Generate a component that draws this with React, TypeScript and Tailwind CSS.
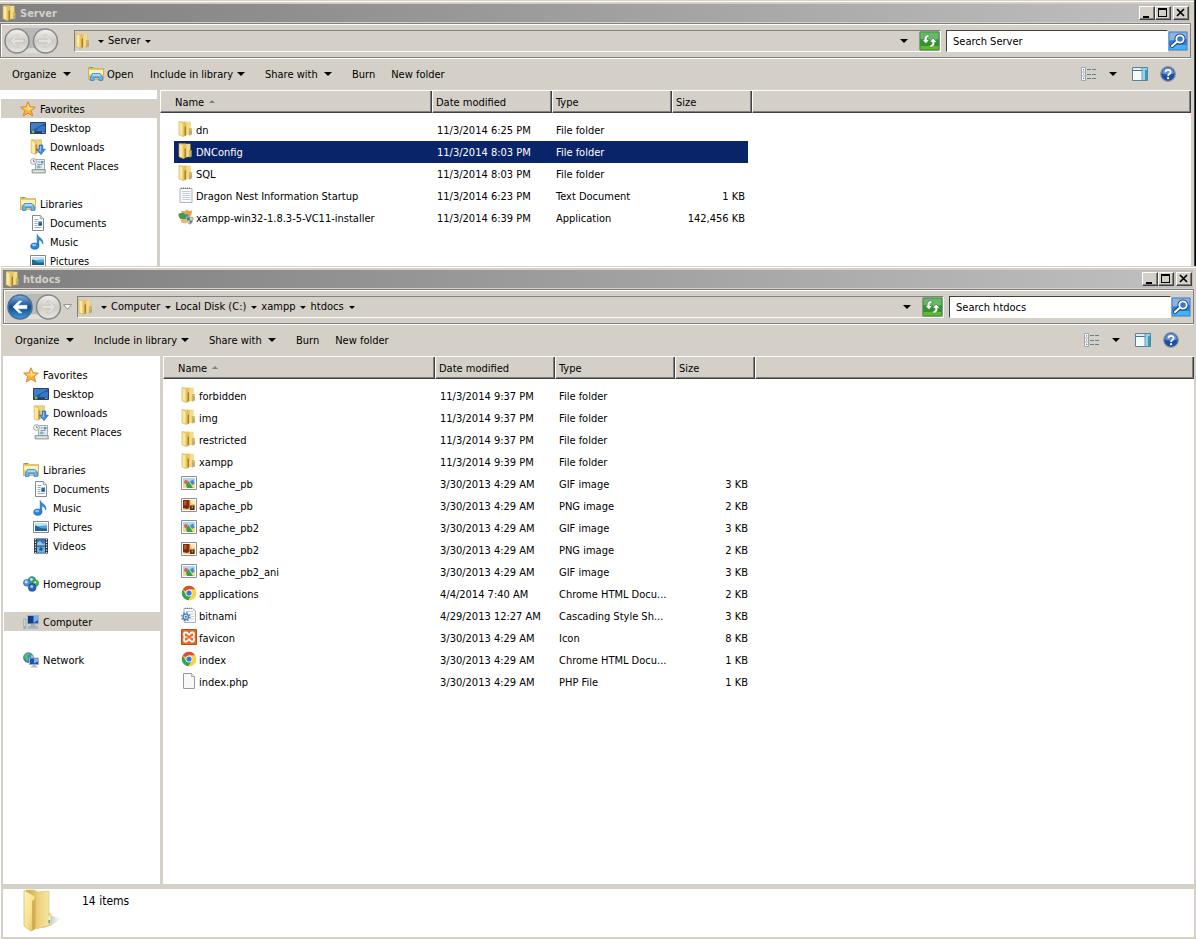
import type { ReactNode } from 'react';
import { clsx } from 'clsx';

type IconProps = { className?: string };

function Icon({ children, className = 'size-4' }: IconProps & { children: ReactNode }) {
  return (
    <svg viewBox="0 0 16 16" className={clsx('shrink-0', className)} aria-hidden="true">
      {children}
    </svg>
  );
}

function FolderIcon({ className }: IconProps) {
  return (
    <Icon className={className}>
      <path d="M2 .5h5.500v14L2 13z" fill="#efd682" />
      <path d="M6 .8h6.500v12.700L6 14.800z" fill="#e3c566" />
      <path d="M8.500 1h3.500v12.200l-3.500.9z" fill="#f2dc8c" />
      <path d="M1 .5 6.500 2.500v12.600l-1.200.4L1 13.800z" fill="#f9ea9f" stroke="#cda540" strokeWidth=".6" />
      <path d="M4.500 2 6.500 2.700v12.400l-1.200.3-.8-.3z" fill="#e6c35e" />
      <path d="M6.600 6v9l1.400-.8V5z" fill="#ab7c26" />
      <path d="M11.300 7.500h2.200v6l-2.200.8z" fill="#dcb850" stroke="#b98f35" strokeWidth=".4" />
      <path d="M12.400 10.300h1v2.700h-1z" fill="#5aa5d8" />
    </Icon>
  );
}

function LibraryIcon({ className }: IconProps) {
  return (
    <Icon className={className}>
      <path d="M.5 1.500h5l1 1.200h9V13.500H.5z" fill="#e8cb6c" stroke="#c4a040" strokeWidth=".7" />
      <path d="M1 4h14v4.500H1z" fill="#faf0b8" />
      <path d="M1.500 1.700h3" stroke="#4fae48" strokeWidth="1.200" />
      <path d="M2.500 14.500V11l2-3.500h7.500l2.500 3.500v3.500h-3.500v-3H6v3z" fill="#63b5ee" stroke="#2e7cc4" strokeWidth=".7" />
      <path d="M5 8.200h6.800l1 1.600H4.200z" fill="#b9e2fb" />
    </Icon>
  );
}

function StarIcon() {
  return (
    <Icon>
      <path d="m8 .7 2.100 5 5.300.4-4 3.500 1.300 5.400L8 12.200 3.300 15l1.300-5.400-4-3.500 5.300-.4z" fill="#f9b234" stroke="#d9782a" strokeWidth=".8" />
      <path d="m8 2.600 1.400 4 3.900.3-5.300 3z" fill="#ffe88c" />
      <path d="m8 2.600-1.400 4-3.900.3L8 9.500z" fill="#fdd25f" />
    </Icon>
  );
}

function DesktopIcon() {
  return (
    <Icon>
      <path d="M.5 2.500h15v11H.5z" fill="#1d5ba8" stroke="#2a3f66" />
      <path d="M1 3h14L1 11z" fill="#3f7fc6" />
      <path d="M8 8.500c2-2 5-3 7-2.500v5H6z" fill="#3777c4" />
      <path d="M1 11.400h14V13H1z" fill="#24426f" />
      <circle cx="3" cy="12" r="1.400" fill="#6cc04a" />
      <path d="M3 10.600A1.400 1.400 0 0 1 4.400 12H3z" fill="#f39a2d" />
      <path d="M12 12.200h2.500" stroke="#9fc2ea" />
    </Icon>
  );
}

function DownloadsIcon() {
  return (
    <Icon>
      <path d="M2 .8h9.500V13.500H6z" fill="#ecd480" stroke="#c9a750" strokeWidth=".5" />
      <path d="M1.200.8 5.500 3v12.400L1.200 14z" fill="#f9ea9f" stroke="#cfa945" strokeWidth=".6" />
      <path d="M5.600 6v9l1.600-1V5z" fill="#b98b33" />
      <path d="M9.300 6h3.400v4.200h2.600L11 15.600l-4.300-5.400h2.600z" fill="#3f8ee4" stroke="#1b57ae" strokeWidth=".7" />
      <path d="M10 6.800h1v6L8.200 10.800H10z" fill="#8fc4f7" />
    </Icon>
  );
}

function RecentIcon() {
  return (
    <Icon>
      <path d="M5.500 1.500h9v10h-9z" fill="#e6ebee" stroke="#8f989c" strokeWidth=".8" />
      <path d="M7.500 4h3M7.500 6.500h5M7.500 9h4" stroke="#8a9aa4" />
      <path d="M11 3h2.400v2.400H11z" fill="#4d94c4" />
      <path d="M6.800 7.600h3.200v2.600H6.800z" fill="#79b7c9" />
      <path d="M2 11.500h13.300V15H2z" fill="#c2c6c6" stroke="#82898b" strokeWidth=".7" />
      <path d="M3.500 13.200h10.300" stroke="#f3f3f3" />
      <circle cx="3.500" cy="3.500" r="2.900" fill="#f5f7f8" stroke="#8a9194" strokeWidth=".8" />
      <path d="M3.500 1.800v1.900H5" fill="none" stroke="#4c5458" strokeWidth=".7" />
    </Icon>
  );
}

function DocumentIcon() {
  return (
    <Icon>
      <path d="M2.500.5h7.800l3.200 3.200v11.800h-11z" fill="#fdfdfd" stroke="#858a8f" />
      <path d="M10.300.5v3.200h3.200" fill="#dfe4e8" stroke="#858a8f" strokeWidth=".7" />
      <path d="M4.500 4.500h4M4.500 6.500h3M4.500 8.500h3M4.500 10.500h3M4.500 12.500h7" stroke="#7c97b4" strokeWidth=".8" />
      <path d="M8.300 6.500h3.700v4H8.300z" fill="#2f72b8" />
      <path d="m8.300 10.500 2-2.300 1.700 2.300z" fill="#174879" />
    </Icon>
  );
}

function MusicIcon() {
  return (
    <Icon>
      <path d="M7.200 12V.500c.6 3 6.600 3.600 5.600 9.500-.4-2.200-2.200-3.700-4-4.200V12z" fill="#2e8be0" stroke="#1863b4" strokeWidth=".6" />
      <ellipse cx="4.800" cy="12.200" rx="4.100" ry="3.100" fill="#2b84dc" stroke="#1863b4" strokeWidth=".6" />
      <ellipse cx="4.100" cy="11.200" rx="2.100" ry="1.100" fill="#93cbf8" />
    </Icon>
  );
}

function PictureIcon() {
  return (
    <Icon>
      <path d="M.5 2.500h15v11H.5z" fill="#fff" stroke="#85898c" />
      <path d="M2 4h12v8H2z" fill="#4ba3e0" />
      <path d="M2 4h12v2.200L2 7.500z" fill="#bfe3f5" />
      <path d="M2 6.500c2 0 3 1.300 5 2.300s4 .7 7 .6V12H2z" fill="#1d6f8c" />
      <path d="M2 10.300c4 .8 8 .6 12-.2V12H2z" fill="#2a56a0" />
    </Icon>
  );
}

function VideoIcon() {
  return (
    <Icon>
      <path d="M1 .5h14v15H1z" fill="#2c3138" />
      <path d="M4 1.200h8v6.300H4z" fill="#2f77c8" />
      <path d="M4 8.500h8v6.300H4z" fill="#62b4ee" />
      <path d="m4 5 3-2 3 3 2-1v2.500H4z" fill="#86caef" />
      <path d="m7 9 3 1-1 3-3-1z" fill="#205aa5" />
      <path d="M2.500 1v14M13.500 1v14" stroke="#eef0f2" strokeWidth="1.300" strokeDasharray="1.300 1.300" />
    </Icon>
  );
}

function HomegroupIcon() {
  return (
    <Icon>
      <circle cx="9" cy="4.200" r="3.600" fill="#3da88c" stroke="#1e6d77" strokeWidth=".6" />
      <circle cx="3.800" cy="6.800" r="3.400" fill="#4d93d8" stroke="#2a5da6" strokeWidth=".6" />
      <circle cx="12.400" cy="7.200" r="3.200" fill="#47b157" stroke="#28803c" strokeWidth=".6" />
      <circle cx="9.200" cy="11.400" r="3.900" fill="#2c62bb" stroke="#183f88" strokeWidth=".6" />
      <circle cx="3.200" cy="6" r="1.400" fill="#d3eafa" />
      <circle cx="8.400" cy="3.400" r="1.300" fill="#c4f0d8" />
      <circle cx="12.200" cy="6.300" r="1.100" fill="#d0f4c6" />
      <circle cx="8.700" cy="10.500" r="1.500" fill="#a6cbf3" />
    </Icon>
  );
}

function ComputerIcon() {
  return (
    <Icon>
      <path d="M.8 5h2v9.500h-2z" fill="#e5e8ea" stroke="#7b8184" strokeWidth=".6" />
      <path d="M1.300 12h1v1.400h-1z" fill="#53b44a" />
      <path d="M4.500 1.500h11v8.300h-11z" fill="#1c4fae" stroke="#a5afb9" />
      <path d="M5 2h5.500v7.300H5z" fill="#123a8c" />
      <path d="M10.500 2H15v4l-4.500 3z" fill="#76aeec" />
      <path d="M8.500 10.300h3v2h-3zM6 12.300h8l1 2H5z" fill="#b4bcc3" stroke="#868e95" strokeWidth=".4" />
    </Icon>
  );
}

function NetworkIcon() {
  return (
    <Icon>
      <circle cx="5.500" cy="5.700" r="5" fill="#3b86d6" stroke="#2861a5" strokeWidth=".6" />
      <path d="M1.500 3.500C3 1 6 .8 7.800 1.500 7 3 5 3 4.600 4.500s1.500 2.600.3 4.300C3 8.500 1 6 1.500 3.500z" fill="#5fc04f" />
      <path d="M8.500 2.500c1 .6 1.800 1.800 1.800 3H8z" fill="#a7e28b" />
      <path d="M6.500 6h9v6.700h-9z" fill="#1c4fae" stroke="#a9b3bc" />
      <path d="M11 6.500h4v3l-4 2z" fill="#7ab3ef" />
      <path d="M9.800 13h2.600v1.300H9.800zM8.200 14.300h6v1.200h-6z" fill="#aab3ba" />
    </Icon>
  );
}

function TextFileIcon() {
  return (
    <Icon>
      <path d="M2 1.500h12v14H2z" fill="#fbfcfd" stroke="#98a0a8" strokeWidth=".8" />
      <path d="M3 1.300h10" stroke="#6c747b" strokeWidth="1.600" strokeDasharray="1 1" />
      <path d="M4 4.500h8.500M4 6.500h8.500M4 8.500h8.500M4 10.500h8.500M4 12.500h8.500" stroke="#b5c3d0" strokeWidth=".8" />
    </Icon>
  );
}

function InstallerIcon() {
  return (
    <Icon>
      <path d="M2.500 1.500 6.500 2.500 9 .5l2 1.500 3-.5-.5 4L11.500 8.500l-5-1z" fill="#eda04c" />
      <path d="M.8 4.500 5 3.400l2 1.800 3.500.2-.6 4L7 11 2 9.700.4 6.400z" fill="#3f9b58" />
      <path d="m2.500 10.800 5-1L9 12.800 8 14.400l-4.500-.7z" fill="#efb36b" />
      <path d="M11.800 7.200c1 .8 2.200 1 3.500 1 0 3.800-.8 6-3.500 7.300-2.700-1.300-3.500-3.500-3.500-7.300 1.300 0 2.500-.2 3.500-1z" fill="#3c78cf" stroke="#dbe4ee" strokeWidth=".5" />
      <path d="M11.800 7.700c.9.700 1.900 1 3 1 0 1-.1 1.900-.3 2.700h-2.700zM9.100 11.400h2.700V15c-1.500-.8-2.300-2-2.700-3.600z" fill="#f6cf49" />
    </Icon>
  );
}

function GifIcon() {
  return (
    <Icon>
      <path d="M.5 1.500h15v13H.5z" fill="#fff" stroke="#8f8f8f" />
      <path d="M2 3h12v10H2z" fill="#a8daf5" />
      <path d="M2 9.500 14 8v5H2z" fill="#f0dd7a" />
      <path d="m7.500 6 1.500 2.500 3 4.500H6l-1-3z" fill="#36a04a" />
      <circle cx="5" cy="7" r="1.900" fill="#e65e38" />
      <path d="m9 6.500 3-2 1.500 4L11 10z" fill="#4a86cd" />
    </Icon>
  );
}

function PngIcon() {
  return (
    <Icon>
      <path d="M.5 1.500h15v13H.5z" fill="#fff" stroke="#8f8f8f" />
      <path d="M2 3h12v10H2z" fill="#f2c678" />
      <path d="M2 3h6.500v8L6 12 2 11z" fill="#7e2d0f" />
      <path d="M3 4h2.500v4H3z" fill="#bb5a20" />
      <path d="M9.500 3H14v4h-3z" fill="#f8e6c0" />
      <path d="M9 8.500h4.500V13H9z" fill="#4b2a18" />
      <path d="M10.500 9.500h1.500v2h-1.500z" fill="#ee8b24" />
    </Icon>
  );
}

function ChromeIcon() {
  return (
    <Icon>
      <circle cx="8" cy="8" r="7.200" fill="#f8cf3a" />
      <path d="M8 8 1.770 4.400A7.200 7.200 0 0 1 14.230 4.400H8z" fill="#dd4b39" />
      <path d="M1.770 4.400A7.200 7.200 0 0 0 7.400 15.200L11 9.700 8 11.200 4.900 9.700z" fill="#31a353" />
      <path d="M14.230 4.400H8v3l3 2.300-3.600 5.500A7.200 7.200 0 0 0 14.230 4.400z" fill="#fbd13c" />
      <circle cx="8" cy="8" r="3.500" fill="#f4f7f9" />
      <circle cx="8" cy="8" r="2.600" fill="#3a7cd5" />
    </Icon>
  );
}

function CssFileIcon() {
  return (
    <Icon>
      <path d="M3 1.500h8.500L14.500 4v11.500H3z" fill="#fbfcfd" stroke="#969da3" strokeWidth=".8" />
      <path d="M4 1.300h7.500" stroke="#7c848b" strokeWidth="1.300" strokeDasharray="1 1" />
      <path d="M5 4.500h7M9 7h4M10 9.500h3M9 12h4" stroke="#bcc6cf" strokeWidth=".8" />
      <circle cx="4.800" cy="9.800" r="4" fill="none" stroke="#5585ad" strokeWidth="1.500" strokeDasharray="1.600 1.540" />
      <circle cx="4.800" cy="9.800" r="2.700" fill="#dcebf6" stroke="#4d80ac" strokeWidth="1.300" />
      <circle cx="4.800" cy="9.800" r="1" fill="#3e6c96" />
    </Icon>
  );
}

function XamppIcon() {
  return (
    <Icon>
      <path d="M.5.500h15v15H.5z" fill="#ea6a25" stroke="#bf4c14" />
      <path
        d="M4.200 3.500h1.300c1.500 0 1.500 2.300 2.500 2.300s1-2.300 2.500-2.300h1.300c1.600 0 1.600 4 0 4.500 1.600.5 1.600 4.500 0 4.500h-1.300c-1.500 0-1.500-2.300-2.500-2.300s-1 2.300-2.500 2.300H4.200c-1.600 0-1.600-4 0-4.500-1.600-.5-1.600-4.500 0-4.500z"
        fill="none"
        stroke="#fff"
        strokeWidth="1.800"
      />
    </Icon>
  );
}

function BlankFileIcon() {
  return (
    <Icon>
      <path d="M2.500.500h8l3 3v12h-11z" fill="#f8f8f8" stroke="#9a9a9a" />
      <path d="M10.500.500v3h3" fill="#e6e6e6" stroke="#9a9a9a" strokeWidth=".7" />
    </Icon>
  );
}

function BigFolderIcon() {
  return (
    <svg viewBox="0 0 42 44" className="h-11 w-[42px] shrink-0" aria-hidden="true">
      <defs>
        <linearGradient id="flap" x1="0" y1="0" x2="1" y2="1">
          <stop offset="0" stopColor="#fff6bd" />
          <stop offset=".6" stopColor="#f6e08c" />
          <stop offset="1" stopColor="#e0b650" />
        </linearGradient>
        <linearGradient id="back" x1="0" y1="0" x2="1" y2="0">
          <stop offset="0" stopColor="#d0a748" />
          <stop offset=".5" stopColor="#ecd27c" />
          <stop offset="1" stopColor="#f8eaa6" />
        </linearGradient>
        <linearGradient id="shade" x1="0" y1="0" x2="1" y2="0">
          <stop offset="0" stopColor="#a5a5a5" />
          <stop offset="1" stopColor="#fff" />
        </linearGradient>
      </defs>
      <path d="m28 26 11 4-11 7-8 2z" fill="url(#shade)" />
      <path d="M4 1h8l4 2 11-1v22l2 1v11l-15 4z" fill="url(#back)" stroke="#dcc06e" strokeWidth=".6" />
      <path d="M2 1.500 13 7v33l-4 2-7-5z" fill="url(#flap)" stroke="#d2ad4e" strokeWidth=".6" />
      <path d="M10 12l3-2v30l-3 1.500z" fill="#cfa04a" opacity=".75" />
      <path d="M27 24v12" stroke="#cfa945" strokeWidth=".6" />
      <path d="M26.500 27h1.500v6h-1.500z" fill="#eef6fb" />
      <path d="M26.500 31h1.500v3h-1.500z" fill="#4a9fd8" />
    </svg>
  );
}

function Arrow({ small = false }: { small?: boolean }) {
  return small ? (
    <svg viewBox="0 0 6 3" className="h-[3px] w-[6px] shrink-0" aria-hidden="true">
      <path d="M0 0h6L3 3z" />
    </svg>
  ) : (
    <svg viewBox="0 0 8 4" className="h-1 w-2 shrink-0" aria-hidden="true">
      <path d="M0 0h8L4 4z" />
    </svg>
  );
}

// Sets a caption on the same optical line as the 16px icon beside it
function Label({ children }: { children: ReactNode }) {
  return <span className="pt-[2px]">{children}</span>;
}

function TravelButtons({ canGoBack }: { canGoBack: boolean }) {
  return (
    <div className="relative -my-[3px] flex h-7 w-[57px] shrink-0 items-center gap-px">
      <svg viewBox="0 0 57 28" className="absolute inset-0 h-7 w-[57px]" aria-hidden="true">
        <defs>
          <linearGradient id="glass" x1="0" y1="0" x2="0" y2="1">
            <stop offset="0" stopColor="#f2f1ee" />
            <stop offset=".5" stopColor="#cfccc6" />
            <stop offset="1" stopColor="#e8e6e2" />
          </linearGradient>
          <linearGradient id="blue" x1="0" y1="0" x2="0" y2="1">
            <stop offset="0" stopColor="#7fb0df" />
            <stop offset=".5" stopColor="#134a91" />
            <stop offset="1" stopColor="#3f9bdc" />
          </linearGradient>
        </defs>
        <path d="M14 1h30c-8 5-8 18 0 25H14z" fill="#b9b9b8" />
        <path d="M20 24c5-4 13-4 18 0l6 2H14z" fill="#e0ded9" />
        <circle cx="14" cy="14" r="12" fill={canGoBack ? 'url(#blue)' : 'url(#glass)'} stroke={canGoBack ? '#4d6f94' : '#86898a'} strokeWidth="1.500" />
        <circle cx="42.500" cy="14" r="12" fill="url(#glass)" stroke="#86898a" strokeWidth="1.500" />
        <path d="m7 14 6-6h3l-4 4.300h9v3.400h-9l4 4.300h-3z" fill={canGoBack ? '#fff' : '#e3e1dd'} stroke={canGoBack ? '#dbe8f5' : '#bdbab4'} strokeWidth=".6" />
        <path d="m49.500 14-6-6h-3l4 4.300h-9v3.400h9L40.500 20h3z" fill="#e3e1dd" stroke="#bdbab4" strokeWidth=".6" />
      </svg>
      <button type="button" aria-label="Back" className="relative size-7 rounded-full" />
      <button type="button" aria-label="Forward" className="relative size-7 rounded-full" />
    </div>
  );
}

function RefreshIcon() {
  return (
    <svg viewBox="0 0 21 20" className="h-5 w-[21px]" aria-hidden="true">
      <rect x=".5" y=".5" width="20" height="19" rx="1.500" fill="#2f9433" stroke="#8a9a8a" />
      <path d="M1.500 1.500h18V8c-6 2-12 2-18 0z" fill="#67b968" />
      <path d="M1.500 15h18v3.500h-18z" fill="#62b92d" />
      <path d="M9.500 3.500C6 4 5 6 5.200 8.500H3l4 4.300L10.500 8.500H8c0-1.700.5-2.500 2.500-3z" fill="#f4faf2" stroke="#2d6b2e" strokeWidth=".6" />
      <path d="M11 16.500c3.800-.5 5-2.500 4.800-5.300h2.400L14 7l-3.600 4.200H13c0 2-.5 2.800-2.500 3.300z" fill="#f4faf2" stroke="#2d6b2e" strokeWidth=".6" />
    </svg>
  );
}

function SearchIcon() {
  return (
    <svg viewBox="0 0 20 20" className="size-5" aria-hidden="true">
      <rect x=".5" y=".5" width="19" height="19" rx="1" fill="#2c7fd8" stroke="#8aa4bd" />
      <path d="M1.500 1.500h17V8l-17 1.500z" fill="#8fb2e0" />
      <path d="M1.500 14h17v4.500h-17z" fill="#45b0f5" />
      <path d="m4 15 4.500-4" stroke="#17407c" strokeWidth="4" strokeLinecap="round" />
      <circle cx="12" cy="8" r="3.900" fill="#2a66b8" stroke="#17407c" strokeWidth="3.200" />
      <path d="m4 15 4.500-4" stroke="#fff" strokeWidth="2.200" strokeLinecap="round" />
      <circle cx="12" cy="8" r="3.700" fill="#3877c6" stroke="#fff" strokeWidth="1.800" />
    </svg>
  );
}

function ViewIcon() {
  return (
    <Icon>
      <path d="M.5 1.500h4v13h-4zM.5 6h4M.5 10h4" fill="#fff" stroke="#8597a6" strokeWidth=".8" />
      <path d="M2 3.300h1.200v1.200H2zM2 11.700h1.200v1.200H2z" fill="#4c7f9b" />
      <path d="M2 7.400h1.200v1.200H2z" fill="#c9442c" />
      <path d="M6 3.500h10M6 8.500h10M6 12.500h10" stroke="#66808a" strokeDasharray="4 1" />
    </Icon>
  );
}

function PreviewPaneIcon() {
  return (
    <Icon>
      <path d="M.5 1.500h15v13H.5z" fill="#f7f9fb" stroke="#56839f" />
      <path d="M1 2h14v2H1z" fill="#dfeaf3" />
      <path d="M1 4.500h9.500" stroke="#3a76a0" />
      <path d="M10.500 2H15v12h-4.500z" fill="#8ed3ee" />
      <path d="M13 4h2v10h-2z" fill="#3a9cb4" />
      <path d="M10 2v12" stroke="#5f93b5" />
    </Icon>
  );
}

function HelpIcon() {
  return (
    <Icon>
      <circle cx="8" cy="8" r="7.300" fill="#1c4faa" stroke="#8c929b" strokeWidth="1.200" />
      <path d="M2 7.500a6 6 0 0 1 12 0c-3 1.500-9 1.500-12 0z" fill="#5d8fd8" />
      <path d="M5.500 6.200C5.500 3 10.600 3.100 10.600 6c0 1.800-2.500 2-2.500 4" fill="none" stroke="#fff" strokeWidth="1.800" />
      <circle cx="8.100" cy="12.200" r="1.100" fill="#fff" />
    </Icon>
  );
}

type NavItem = { label: string; icon: ReactNode; child?: boolean; gap?: boolean };

const navItems: NavItem[] = [
  { label: 'Favorites', icon: <StarIcon /> },
  { label: 'Desktop', icon: <DesktopIcon />, child: true },
  { label: 'Downloads', icon: <DownloadsIcon />, child: true },
  { label: 'Recent Places', icon: <RecentIcon />, child: true },
  { label: 'Libraries', icon: <LibraryIcon />, gap: true },
  { label: 'Documents', icon: <DocumentIcon />, child: true },
  { label: 'Music', icon: <MusicIcon />, child: true },
  { label: 'Pictures', icon: <PictureIcon />, child: true },
  { label: 'Videos', icon: <VideoIcon />, child: true },
  { label: 'Homegroup', icon: <HomegroupIcon />, gap: true },
  { label: 'Computer', icon: <ComputerIcon />, gap: true },
  { label: 'Network', icon: <NetworkIcon />, gap: true },
];

type FileRow = { name: string; icon: ReactNode; date: string; type: string; size?: string };

const serverFiles: FileRow[] = [
  { name: 'dn', icon: <FolderIcon />, date: '11/3/2014 6:25 PM', type: 'File folder' },
  { name: 'DNConfig', icon: <FolderIcon />, date: '11/3/2014 8:03 PM', type: 'File folder' },
  { name: 'SQL', icon: <FolderIcon />, date: '11/3/2014 8:03 PM', type: 'File folder' },
  { name: 'Dragon Nest Information Startup', icon: <TextFileIcon />, date: '11/3/2014 6:23 PM', type: 'Text Document', size: '1 KB' },
  { name: 'xampp-win32-1.8.3-5-VC11-installer', icon: <InstallerIcon />, date: '11/3/2014 6:39 PM', type: 'Application', size: '142,456 KB' },
];

const htdocsFiles: FileRow[] = [
  { name: 'forbidden', icon: <FolderIcon />, date: '11/3/2014 9:37 PM', type: 'File folder' },
  { name: 'img', icon: <FolderIcon />, date: '11/3/2014 9:37 PM', type: 'File folder' },
  { name: 'restricted', icon: <FolderIcon />, date: '11/3/2014 9:37 PM', type: 'File folder' },
  { name: 'xampp', icon: <FolderIcon />, date: '11/3/2014 9:39 PM', type: 'File folder' },
  { name: 'apache_pb', icon: <GifIcon />, date: '3/30/2013 4:29 AM', type: 'GIF image', size: '3 KB' },
  { name: 'apache_pb', icon: <PngIcon />, date: '3/30/2013 4:29 AM', type: 'PNG image', size: '2 KB' },
  { name: 'apache_pb2', icon: <GifIcon />, date: '3/30/2013 4:29 AM', type: 'GIF image', size: '3 KB' },
  { name: 'apache_pb2', icon: <PngIcon />, date: '3/30/2013 4:29 AM', type: 'PNG image', size: '2 KB' },
  { name: 'apache_pb2_ani', icon: <GifIcon />, date: '3/30/2013 4:29 AM', type: 'GIF image', size: '3 KB' },
  { name: 'applications', icon: <ChromeIcon />, date: '4/4/2014 7:40 AM', type: 'Chrome HTML Docu...', size: '2 KB' },
  { name: 'bitnami', icon: <CssFileIcon />, date: '4/29/2013 12:27 AM', type: 'Cascading Style Sh...', size: '3 KB' },
  { name: 'favicon', icon: <XamppIcon />, date: '3/30/2013 4:29 AM', type: 'Icon', size: '8 KB' },
  { name: 'index', icon: <ChromeIcon />, date: '3/30/2013 4:29 AM', type: 'Chrome HTML Docu...', size: '1 KB' },
  { name: 'index.php', icon: <BlankFileIcon />, date: '3/30/2013 4:29 AM', type: 'PHP File', size: '1 KB' },
];

const captionButton =
  'flex h-[14px] w-4 items-center justify-center border border-t-white border-l-white border-r-[#404040] border-b-[#404040] bg-[#d4d0c8] shadow-[inset_-1px_-1px_0_#808080]';

function TitleBar({ title }: { title: string }) {
  return (
    <header className="mr-px flex h-[18px] items-center bg-linear-to-r from-[#808080] to-[#c0c0c0] pr-px pl-[2px]">
      <FolderIcon />
      <h2 className="ml-[2px] flex-1 pt-[2px] text-[11px] font-bold text-[#d4d0c8]">{title}</h2>
      <button type="button" aria-label="Minimize" className={captionButton}>
        <svg viewBox="0 0 10 10" className="size-[10px]"><path d="M1 8h6v2H1z" /></svg>
      </button>
      <button type="button" aria-label="Maximize" className={captionButton}>
        <svg viewBox="0 0 10 10" className="size-[10px]"><path d="M0 0h9v9H0zM1 2v6h7V2z" fillRule="evenodd" /></svg>
      </button>
      <button type="button" aria-label="Close" className={clsx(captionButton, 'ml-[2px]')}>
        <svg viewBox="0 0 10 10" className="size-[10px]"><path d="m1 1 7 7M8 1 1 8" stroke="#000" strokeWidth="1.700" /></svg>
      </button>
    </header>
  );
}

function AddressBar({ title, path, canGoBack }: { title: string; path: string[]; canGoBack: boolean }) {
  return (
    <div className="mt-px flex items-center border border-[#808080] pt-[6px] pr-[2px] pb-[5px] pl-[2px] shadow-[inset_1px_1px_0_#fff,0_1px_0_#fff]">
      <TravelButtons canGoBack={canGoBack} />
      <div className="flex w-[13px] items-center">
        {canGoBack && (
          <button type="button" aria-label="Recent pages">
            <svg viewBox="0 0 9 6" className="h-[6px] w-[9px]">
              <path d="M.5.500h8L4.500 5.300z" fill="#f4f3f0" stroke="#85837e" strokeWidth=".8" />
            </svg>
          </button>
        )}
      </div>
      <nav className="ml-px flex h-[22px] flex-1 items-center border border-t-[#808080] border-r-white border-b-white border-l-[#808080]">
        <FolderIcon className="size-4" />
        <span className="ml-[7px] flex items-center"><Arrow small /></span>
        {path.map((part) => (
          <button key={part} type="button" className="flex items-center gap-[5px] pl-1 whitespace-nowrap">
            {part}
            <Arrow small />
          </button>
        ))}
        <button type="button" aria-label="Previous locations" className="mr-[10px] ml-auto px-px"><Arrow /></button>
        <button type="button" aria-label="Refresh"><RefreshIcon /></button>
      </nav>
      <input
        type="search"
        aria-label={`Search ${title}`}
        placeholder={`Search ${title}`}
        className="ml-[5px] h-[22px] w-[222px] border border-t-[#404040] border-r-white border-b-white border-l-[#404040] bg-white pl-[6px] text-[11px] placeholder:text-black"
      />
      <button type="button" aria-label="Search"><SearchIcon /></button>
    </div>
  );
}

function Toolbar({ withOpen }: { withOpen: boolean }) {
  return (
    <div className="flex h-8 items-center pr-[15px] pl-3 whitespace-nowrap">
      <button type="button" className="flex w-[59px] items-center justify-between"><Label>Organize</Label><Arrow /></button>
      {withOpen && (
        <button type="button" className="ml-[17px] flex w-[46px] items-center gap-[3px]">
          <LibraryIcon className="size-4" />
          <Label>Open</Label>
        </button>
      )}
      <button type="button" className={clsx('flex w-[95px] items-center justify-between', withOpen ? 'ml-4' : 'ml-5')}>
        <Label>Include in library</Label>
        <Arrow />
      </button>
      <button type="button" className="ml-5 flex w-[67px] items-center justify-between"><Label>Share with</Label><Arrow /></button>
      <button type="button" className="ml-5 flex"><Label>Burn</Label></button>
      <button type="button" className="ml-4 flex"><Label>New folder</Label></button>
      <div className="ml-auto flex items-center">
        <button type="button" aria-label="Change your view"><ViewIcon /></button>
        <button type="button" aria-label="More options" className="ml-3"><Arrow /></button>
        <button type="button" aria-label="Show the preview pane" className="ml-[15px]"><PreviewPaneIcon /></button>
        <button type="button" aria-label="Get help" className="ml-3"><HelpIcon /></button>
      </div>
    </div>
  );
}

function NavPane({ items, active }: { items: NavItem[]; active: string }) {
  return (
    <ul className="w-[157px] shrink-0 bg-white pt-[9px] pl-px">
      {items.map(({ label, icon, child, gap }) => (
        <li key={label} className={clsx(gap && 'mt-[19px]')}>
          <a
            href="#"
            className={clsx('flex h-[19px] items-center gap-1', child ? 'pl-[29px]' : 'pl-[19px]', label === active && 'bg-[#d4d0c8]')}
          >
            {icon}
            <Label>{label}</Label>
          </a>
        </li>
      ))}
    </ul>
  );
}

const headCell =
  'h-[23px] border-t border-l border-t-white border-l-white border-b border-b-[#404040] bg-[#d4d0c8] p-0 pt-[2px] text-left font-normal shadow-[inset_-1px_0_0_#404040,inset_-2px_-1px_0_#808080]';

function FileTable({ files, selected }: { files: FileRow[]; selected?: string }) {
  return (
    <div className="min-w-0 flex-1 bg-white">
      <table className="w-full table-fixed border-separate border-spacing-0">
        <colgroup>
          <col className="w-[272px]" />
          <col className="w-[120px]" />
          <col className="w-[120px]" />
          <col className="w-20" />
          <col />
        </colgroup>
        <thead>
          <tr>
            <th className={clsx(headCell, 'pl-[14px]')}>
              <span className="flex items-center gap-[5px]">
                Name
                <svg viewBox="0 0 6 3" className="mb-[2px] h-[3px] w-[6px]" aria-hidden="true"><path d="M0 3h6L3 0z" fill="#808080" /></svg>
              </span>
            </th>
            <th className={clsx(headCell, 'pl-[3px]')}>Date modified</th>
            <th className={clsx(headCell, 'pl-[3px]')}>Type</th>
            <th className={clsx(headCell, 'pl-[3px]')}>Size</th>
            <td className={headCell} />
          </tr>
        </thead>
        <tbody className="before:block before:h-[6px] before:content-['']">
          {files.map((file, i) => {
            const on = file.name === selected;
            const cell = clsx('flex h-[22px] items-start pt-[2px] leading-[20px] whitespace-nowrap', on && 'bg-[#0a246a] text-white');
            return (
              <tr key={i}>
                <td className="p-0 pl-[14px]">
                  <div className={clsx(cell, 'gap-[2px] pl-1')}>
                    {file.icon}
                    {file.name}
                  </div>
                </td>
                <td className="p-0"><div className={clsx(cell, 'pl-[5px]')}>{file.date}</div></td>
                <td className="p-0"><div className={clsx(cell, 'pl-1')}>{file.type}</div></td>
                <td className="p-0 pr-1"><div className={clsx(cell, 'justify-end pr-[3px]')}>{file.size}</div></td>
                <td className="p-0" />
              </tr>
            );
          })}
        </tbody>
      </table>
    </div>
  );
}

type ExplorerProps = {
  title: string;
  path: string[];
  nav: NavItem[];
  files: FileRow[];
  activeNav: string;
  selected?: string;
  canGoBack?: boolean;
  withOpen?: boolean;
  status?: string;
  className?: string;
};

function ExplorerWindow({ title, path, nav, files, activeNav, selected, canGoBack = false, withOpen = false, status, className }: ExplorerProps) {
  return (
    <section className={clsx('flex flex-col overflow-hidden bg-[#d4d0c8] pt-1 shadow-[inset_0_1px_0_#d4d0c8,inset_0_2px_0_#fff]', className)}>
      <TitleBar title={title} />
      <AddressBar title={title} path={path} canGoBack={canGoBack} />
      <Toolbar withOpen={withOpen} />
      <div className="flex min-h-0 flex-1 gap-[3px] overflow-hidden">
        <NavPane items={nav} active={activeNav} />
        <FileTable files={files} selected={selected} />
      </div>
      {status && (
        <footer className="mt-[5px] mb-[2px] flex h-12 items-start bg-white pl-[19px]">
          <BigFolderIcon />
          <p className="ml-[18px] pt-[3px] text-xs leading-[18px]">{status}</p>
        </footer>
      )}
    </section>
  );
}

export default function App() {
  return (
    <main className="flex h-screen min-h-[720px] flex-col bg-white text-[11px] leading-[14px] text-black [font-family:'DejaVu_Sans_Condensed','DejaVu_Sans',sans-serif]">
      <div className="flex h-[266px] shrink-0 bg-black pr-px">
        <ExplorerWindow
          title="Server"
          path={['Server']}
          nav={navItems.slice(0, 8)}
          files={serverFiles}
          activeNav="Favorites"
          selected="DNConfig"
          withOpen
          className="flex-1 border-r border-[#404040] pr-[3px]"
        />
      </div>
      <ExplorerWindow
        title="htdocs"
        path={['Computer', 'Local Disk (C:)', 'xampp', 'htdocs']}
        nav={navItems}
        files={htdocsFiles}
        activeNav="Computer"
        canGoBack
        status="14 items"
        className="flex-1 border-l border-white pr-[2px] pl-[2px]"
      />
    </main>
  );
}
